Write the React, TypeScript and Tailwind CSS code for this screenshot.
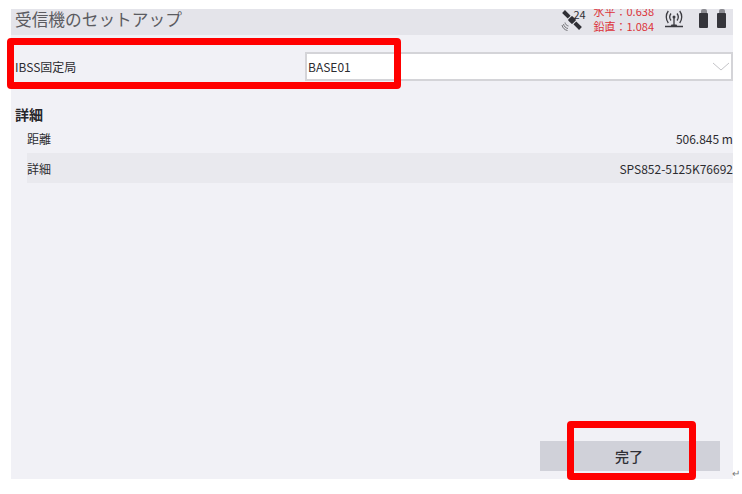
import React from "react";

const font = "font-['Noto_Sans_CJK_JP','Noto_Sans',sans-serif]";

function SatelliteIcon() {
  return (
    <svg width="22" height="22" viewBox="0 0 22 22" className="text-[#2f2f35]">
      <g transform="rotate(-45 11 11)" fill="currentColor">
        <rect x="8" y="8" width="6" height="6" rx="1" />
        <rect x="9" y="-1" width="4" height="8" />
        <rect x="9" y="15" width="4" height="8" />
      </g>
      <path d="M4 13.500c.3 1.800 1.600 3.100 3.500 3.500M2.500 15c.5 2.400 2.200 4.100 4.500 4.500M1 16c.6 3 2.800 5 5.500 5.500" fill="none" stroke="#66666b" strokeWidth="0.900" />
    </svg>
  );
}

function AntennaIcon() {
  return (
    <svg width="20" height="20" viewBox="0 0 20 20" fill="none" stroke="#3a3a40" strokeWidth="1.300">
      <circle cx="10" cy="7" r="1.500" fill="#3a3a40" stroke="none" />
      <path d="M7 3.500c-1.500 2-1.500 5 0 7M13 3.500c1.500 2 1.500 5 0 7M4.300 1c-2.700 3.500-2.700 8.500 0 12M15.700 1c2.700 3.500 2.700 8.500 0 12" />
      <path d="M10 8v8M1 16.500h18" />
      <path d="M7.500 14.500h5l1 2h-7z" fill="#3a3a40" stroke="none" />
    </svg>
  );
}

function Battery() {
  return (
    <div className="flex flex-col items-center w-[9px]">
      <div className="w-[6px] h-[4px] rounded-t-[2px] bg-[#8c8c92]" />
      <div className="w-[9px] h-[15px] rounded-[1px] bg-[#35353b]" />
    </div>
  );
}

function DetailRow({ label, value, shaded }: { label: string; value: string; shaded?: boolean }) {
  return (
    <div className={`flex items-center justify-between text-[12px] text-[#2c2c30] ${shaded ? "h-[30px] pt-[1px] bg-[#e9e9ee]" : "h-[29px]"}`}>
      <span>{label}</span>
      <span>{value}</span>
    </div>
  );
}

export default function App() {
  return (
    <div className={`relative w-[742px] h-[494px] bg-white pt-[9px] pl-[11px] overflow-hidden ${font}`}>
      <div className="w-[722px] h-[470px] bg-[#f1f1f6] flex flex-col">
        {/* header */}
        <div className="h-[26px] shrink-0 bg-[#e4e4ea] flex items-start justify-between overflow-hidden pl-[4px] pr-[7px]">
          <h1 className="text-[16.700px] leading-[20px] text-[#5b5b60] font-normal">受信機のセットアップ</h1>
          <div className="flex items-start">
            <div className="relative mr-[7px] w-[26px] h-[26px]">
              <SatelliteIcon />
              <span className="absolute left-[13px] top-[-2px] text-[11px] leading-[14px] text-[#2f2f35]">24</span>
            </div>
            <div className="mr-[10px] flex flex-col text-[11px] leading-[15px] text-[#dc3238] mt-[-5px]">
              <span>水平：0.638</span>
              <span>鉛直：1.084</span>
            </div>
            <div className="mr-[15px] mt-[1px]">
              <AntennaIcon />
            </div>
            <div className="flex gap-[9px] items-start">
              <Battery />
              <Battery />
            </div>
          </div>
        </div>

        {/* base station */}
        <div className="mt-[17px] h-[29px] flex items-center pl-[4px]">
          <span className="w-[290px] text-[12px] text-[#2c2c30]">IBSS固定局</span>
          <div className="flex-1 h-full bg-white border-2 border-[#d4d4d8] flex items-center justify-between pl-[1px] pr-[1px]">
            <span className="text-[12px] text-[#2c2c30]">BASE01</span>
            <svg width="18" height="10" viewBox="0 0 18 10" fill="none" stroke="#c4c4c8" strokeWidth="1">
              <path d="M1 1l8 7 8-7" />
            </svg>
          </div>
        </div>

        {/* detail */}
        <h2 className="mt-[23px] pl-[4px] text-[14px] leading-[20px] font-bold text-[#26262a]">詳細</h2>
        <div className="pl-[16px]">
          <DetailRow label="距離" value="506.845 m" />
          <DetailRow label="詳細" value="SPS852-5125K76692" shaded />
        </div>

        {/* footer */}
        <div className="mt-auto mb-[8px] flex justify-end pr-[13px]">
          <button className="w-[180px] h-[30px] pr-[2px] bg-[#d0d1d9] text-[14px] font-medium text-[#2f2f35]">完了</button>
        </div>
      </div>

      {/* annotation marks over the screenshot */}
      <div className="absolute left-[7px] top-[38px] w-[394px] h-[51px] border-[7px] border-[#ff0000] rounded-[4px]" />
      <div className="absolute left-[567px] top-[421px] w-[129px] h-[59px] border-[7px] border-[#ff0000] rounded-[4px]" />
      <span className="absolute left-[732px] top-[467px] text-[10px] leading-[12px] text-[#777]">↵</span>
    </div>
  );
}
